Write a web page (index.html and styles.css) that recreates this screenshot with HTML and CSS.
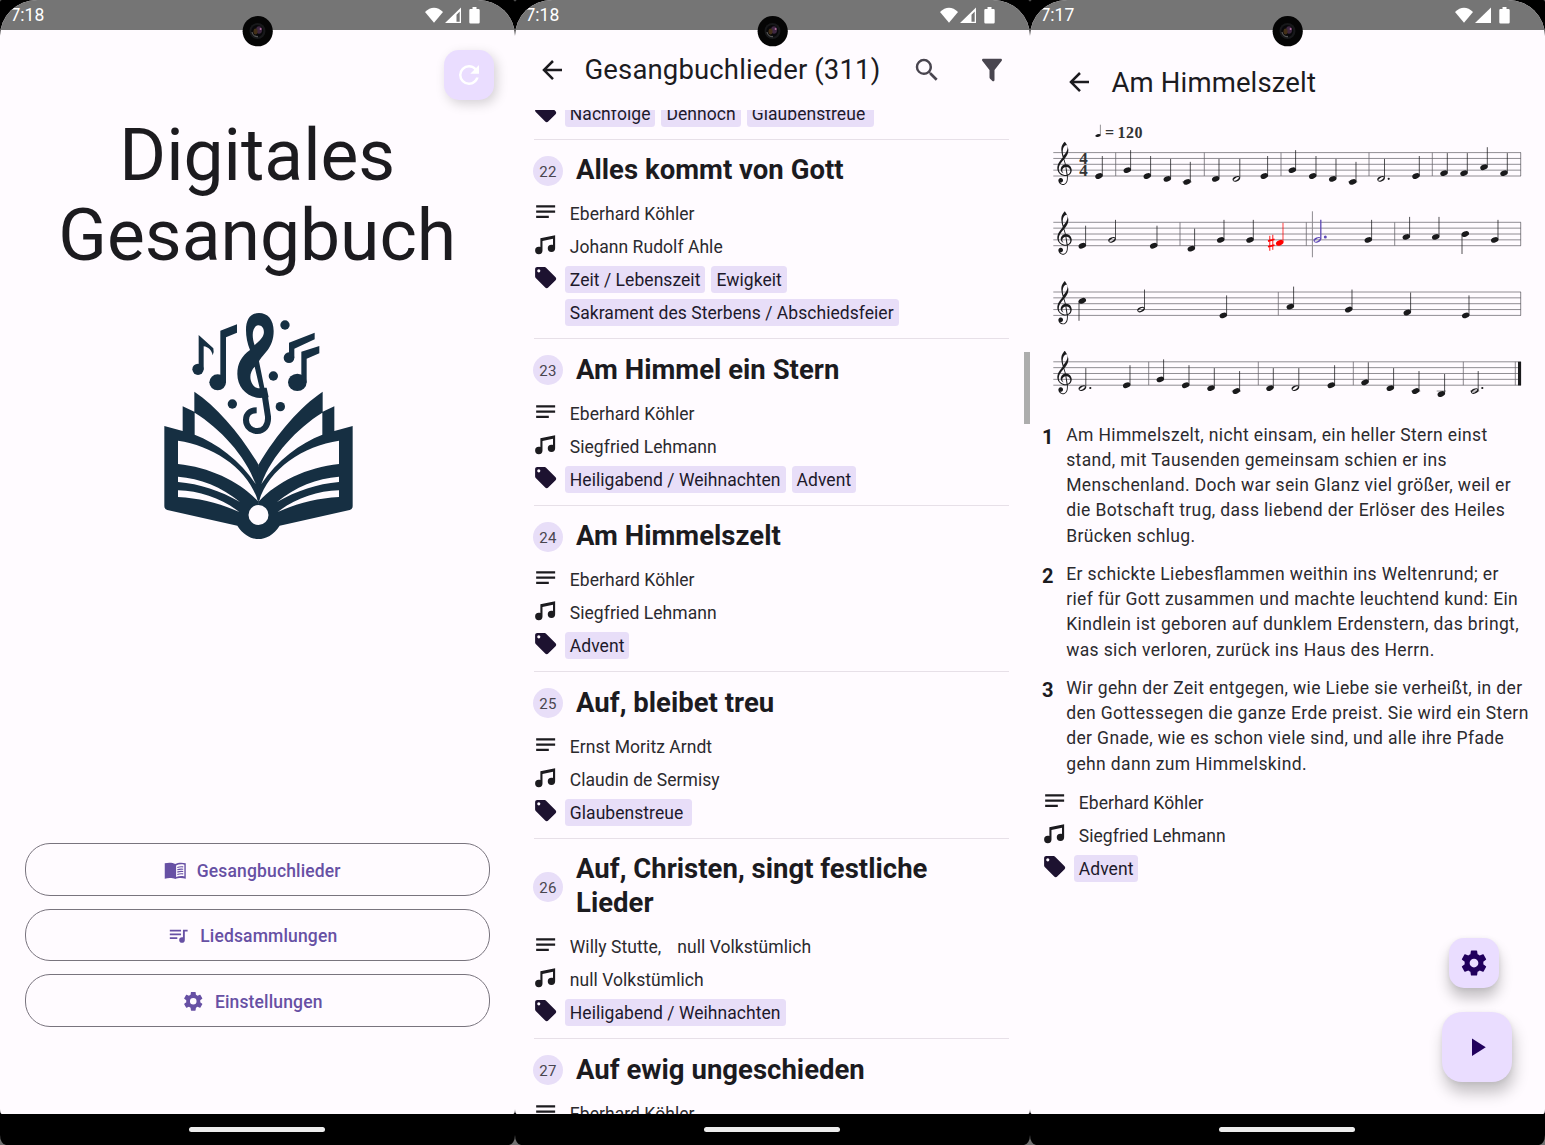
FILE: index.html
```html
<!DOCTYPE html>
<html lang="de">
<head>
<meta charset="utf-8">
<title>Digitales Gesangbuch</title>
<link rel="stylesheet" href="styles.css">
</head>
<body>
<svg class="defs" width="0" height="0" aria-hidden="true">
  <defs>
    <symbol id="i-back" viewBox="0 0 24 24"><path d="M20,11V13H8L13.5,18.5L12.08,19.92L4.16,12L12.08,4.08L13.5,5.5L8,11H20Z"/></symbol>
    <symbol id="i-search" viewBox="0 0 24 24"><path d="M9.5,3A6.5,6.5 0 0,1 16,9.5C16,11.11 15.41,12.59 14.44,13.73L14.71,14H15.5L20.5,19L19,20.5L14,15.5V14.71L13.73,14.44C12.59,15.41 11.11,16 9.5,16A6.5,6.5 0 0,1 3,9.5A6.5,6.5 0 0,1 9.5,3M9.5,5C7,5 5,7 5,9.5C5,12 7,14 9.5,14C12,14 14,12 14,9.5C14,7 12,5 9.5,5Z"/></symbol>
    <symbol id="i-filter" viewBox="0 0 24 24"><path d="M14,12V19.88C14.04,20.18 13.94,20.5 13.71,20.71C13.32,21.1 12.69,21.1 12.3,20.71L10.29,18.7C10.06,18.47 9.96,18.16 10,17.87V12H9.97L4.21,4.62C3.87,4.19 3.95,3.56 4.38,3.22C4.57,3.08 4.78,3 5,3V3H19V3C19.22,3 19.43,3.08 19.62,3.22C20.05,3.56 20.13,4.19 19.79,4.62L14.03,12H14Z"/></symbol>
    <symbol id="i-refresh" viewBox="0 0 24 24"><path d="M17.65,6.35C16.2,4.9 14.21,4 12,4A8,8 0 0,0 4,12A8,8 0 0,0 12,20C15.73,20 18.84,17.45 19.73,14H17.65C16.83,16.33 14.61,18 12,18A6,6 0 0,1 6,12A6,6 0 0,1 12,6C13.66,6 15.14,6.69 16.22,7.78L13,11H20V4L17.65,6.35Z"/></symbol>
    <symbol id="i-text" viewBox="0 0 24 24"><path d="M3 18h12v-2H3v2zM3 6v2h18V6H3zm0 7h18v-2H3v2z"/></symbol>
    <symbol id="i-music" viewBox="0 0 24 24"><path d="M21,3V15.5A3.5,3.5 0 0,1 17.5,19A3.5,3.5 0 0,1 14,15.5A3.5,3.5 0 0,1 17.5,12C18.04,12 18.55,12.12 19,12.34V6.47L9,8.6V17.5A3.5,3.5 0 0,1 5.5,21A3.5,3.5 0 0,1 2,17.5A3.5,3.5 0 0,1 5.5,14C6.04,14 6.55,14.12 7,14.34V6L21,3Z"/></symbol>
    <symbol id="i-tag" viewBox="0 0 24 24"><path d="M5.5,7A1.5,1.5 0 0,1 4,5.5A1.5,1.5 0 0,1 5.5,4A1.5,1.5 0 0,1 7,5.5A1.5,1.5 0 0,1 5.5,7M21.41,11.58L12.41,2.58C12.05,2.22 11.55,2 11,2H4C2.89,2 2,2.89 2,4V11C2,11.55 2.22,12.05 2.59,12.41L11.58,21.41C11.95,21.77 12.45,22 13,22C13.55,22 14.05,21.77 14.41,21.41L21.41,14.41C21.78,14.05 22,13.55 22,13C22,12.44 21.77,11.94 21.41,11.58Z"/></symbol>
    <symbol id="i-playlist" viewBox="0 0 24 24"><path d="M15,6H3V8H15V6M15,10H3V12H15V10M3,16H11V14H3V16M17,6V14.18C16.69,14.07 16.35,14 16,14A3,3 0 0,0 13,17A3,3 0 0,0 16,20A3,3 0 0,0 19,17V8H22V6H17Z"/></symbol>
    <symbol id="i-play" viewBox="0 0 24 24"><path d="M8,5.14V19.14L19,12.14L8,5.14Z"/></symbol>
    <symbol id="i-cog" viewBox="0 0 24 24"><path d="M12,15.5A3.5,3.5 0 0,1 8.5,12A3.5,3.5 0 0,1 12,8.5A3.5,3.5 0 0,1 15.5,12A3.5,3.5 0 0,1 12,15.5M19.43,12.97C19.47,12.65 19.5,12.33 19.5,12C19.5,11.67 19.47,11.34 19.43,11L21.54,9.37C21.73,9.22 21.78,8.95 21.66,8.73L19.66,5.27C19.54,5.05 19.27,4.96 19.05,5.05L16.56,6.05C16.04,5.66 15.5,5.32 14.87,5.07L14.5,2.42C14.46,2.18 14.25,2 14,2H10C9.75,2 9.54,2.18 9.5,2.42L9.13,5.07C8.5,5.32 7.96,5.66 7.44,6.05L4.95,5.05C4.73,4.96 4.46,5.05 4.34,5.27L2.34,8.73C2.21,8.95 2.27,9.22 2.46,9.37L4.57,11C4.53,11.34 4.5,11.67 4.5,12C4.5,12.33 4.53,12.65 4.57,12.97L2.46,14.63C2.27,14.78 2.21,15.05 2.34,15.27L4.34,18.73C4.46,18.95 4.73,19.03 4.95,18.95L7.44,17.94C7.96,18.34 8.5,18.68 9.13,18.93L9.5,21.58C9.54,21.82 9.75,22 10,22H14C14.25,22 14.46,21.82 14.5,21.58L14.87,18.93C15.5,18.67 16.04,18.34 16.56,17.94L19.05,18.95C19.27,19.03 19.54,18.95 19.66,18.73L21.66,15.27C21.78,15.05 21.73,14.78 21.54,14.63L19.43,12.97Z"/></symbol>
    <symbol id="i-book" viewBox="0 0 24 24"><path fill-rule="evenodd" d="M.8 4.600C4.500 3.500 9 3.600 12 5.300C15 3.600 19.500 3.500 23.200 4.600V21C19.500 19.900 15 19.900 12 21.400C9 19.900 4.500 19.900 .8 21ZM12.900 6.900V19.200C15.500 18.200 18.600 18 21.700 18.600V6.100C18.600 5.400 15.500 5.700 12.900 6.900Z"/><path d="M14.200 9C16 8.300 18.100 8.100 20.500 8.400M14.200 11.500C16 10.800 18.100 10.600 20.500 10.900M14.200 14C16 13.300 18.100 13.100 20.500 13.400M14.200 16.500C16 15.800 18.100 15.600 20.500 15.900" fill="none" stroke="currentColor" stroke-width="1.200"/></symbol>
    <symbol id="i-status" viewBox="0 0 60 20"><path d="M1 7C6.500 1.200 13.500 1.200 19 7L10 17.800Z"/><path d="M37 2.500V18H21Z"/><path d="M46.500 4H48.500V2H52.500V4H54.500Q55.700 4 55.700 5.200V17.300Q55.700 18.500 54.500 18.500H46.500Q45.300 18.500 45.300 17.300V5.200Q45.300 4 46.500 4Z"/></symbol>
    <symbol id="i-status-low" viewBox="0 0 60 20"><path d="M1 7C6.500 1.200 13.500 1.200 19 7L10 17.800Z"/><path fill-rule="evenodd" d="M37 2.500V18H21ZM35.700 6.500L32.500 9.800V16.800H35.700Z"/><path d="M46.500 4H48.500V2H52.500V4H54.500Q55.700 4 55.700 5.200V17.300Q55.700 18.500 54.500 18.500H46.500Q45.300 18.500 45.300 17.300V5.200Q45.300 4 46.500 4Z"/></symbol>
    <symbol id="camera" viewBox="0 0 32 32"><circle cx="15.700" cy="16.200" r="15.100" fill="#050505"/><circle cx="15.500" cy="16" r="8" fill="#17181a"/><circle cx="15.300" cy="16" r="6" fill="#08080a"/><path d="M10 17A5.500 5.500 0 0 0 16 21.500" fill="none" stroke="#555" stroke-width="1.300"/><ellipse cx="17" cy="15" rx="3" ry="3.800" fill="#3f2842"/><ellipse cx="13.500" cy="16.500" rx="2" ry="3" fill="#443017"/><circle cx="18.600" cy="14" r="1" fill="#b06fa0"/></symbol>

    <!-- engraving symbols: heads are centred on 0,0; one staff space is 5.85 -->
    <g id="head"><ellipse rx="3.900" ry="2.600" transform="rotate(-22)"/></g>
    <g id="q"><use href="#head"/><path d="M3.300 -.500V-20" fill="none" stroke="currentColor" stroke-width=".75"/></g>
    <g id="qd"><use href="#head"/><path d="M-3.300 .5V20" fill="none" stroke="currentColor" stroke-width=".75"/></g>
    <g id="h"><path fill-rule="evenodd" transform="rotate(-22)" d="M-3.900 0A3.900 2.500 0 1 1 3.900 0A3.900 2.500 0 1 1 -3.900 0ZM-3.100 .6Q-1.500 1.700 1.200 .8Q3.400 .1 3 -.8Q1.500 -1.600 -1 -.9Q-3.400 -.2 -3.100 .6Z"/><path d="M3.500 -.5V-20" fill="none" stroke="currentColor" stroke-width=".75"/></g>
    <g id="ledger"><path d="M-4.600 0H4.600" stroke="currentColor" stroke-width=".5"/></g>
    <g id="staff"><path d="M23.300 0H491M23.300 5.850H491M23.300 11.700H491M23.300 17.550H491M23.300 23.400H491" fill="none" stroke="#646268" stroke-width=".72"/></g>
    <g id="clef"><path fill-rule="evenodd" transform="translate(27.300 17.550) scale(.755)" d="M9.690-37.410c.09-.09.24-.06.36 0c.12.09.57.6.96 1.110c1.770 2.340 3.210 5.850 3.570 8.730c.21 1.560.03 3.270-.45 4.860c-.69 2.310-1.920 4.470-4.230 7.440c-.3.39-.57.72-.6.75c-.03.06 0 .15.18.78c.54 1.680 1.380 4.440 1.680 5.490l.09.42l.39 0c1.470.09 2.760.51 3.960 1.290c1.830 1.230 3.060 3.210 3.390 5.520c.09.45.12 1.290.06 1.740c-.09 1.020-.33 1.830-.75 2.730c-.84 1.710-2.280 3.060-4.020 3.720l-.33.12l.03 1.260c0 1.740-.06 3.630-.21 4.620c-.45 3.060-2.190 5.490-4.470 6.210c-.57.18-.9.21-1.590.21c-.69 0-1.020-.03-1.650-.21c-1.140-.27-2.130-.84-2.940-1.650c-.99-.99-1.560-2.160-1.710-3.540c-.09-.81.06-1.530.45-2.130c.63-.99 1.830-1.560 3-1.530c1.500.09 2.640 1.320 2.730 2.940c.06 1.470-.93 2.700-2.370 2.970c-.45.06-.84.03-1.290-.09l-.21-.09l.09.12c.39.54.78.93 1.320 1.260c1.350.87 3.060 1.020 4.350.36c1.440-.72 2.520-2.280 2.970-4.350c.15-.66.24-1.500.3-3.030c.03-.84.03-2.940 0-3c-.03 0-.18 0-.36.03c-.66.12-.99.12-1.830.12c-1.050 0-1.710-.06-2.610-.3c-4.020-.99-7.110-4.350-7.800-8.460c-.12-.66-.12-.99-.12-1.830c0-.84 0-1.140.15-1.920c.36-2.280 1.410-4.620 3.300-7.290l2.790-3.600c.54-.66.96-1.200.96-1.230c0-.03-.09-.33-.18-.69c-.96-3.210-1.410-5.280-1.590-7.680c-.12-1.380-.15-3.090-.06-3.960c.33-2.670 1.380-5.070 3.120-7.080c.36-.42.99-1.050 1.170-1.140zM11.900-33.200c1.400.5 1.900 2.200 1.600 4.400c-.4 3.300-2.500 6.500-5.400 9.700c-.7-2.300-1-4.600-.9-6.400c.2-3.600 2-7.100 4.700-7.700zM8.400-13.700C4.200-8.900 2-5.700 2-1.800C2 3.600 6.100 6.700 12.300 6.500L10.800-4.200C8.400-3.900 6.600-2 6.500.3C6.500 1.800 7.300 3 8.600 4.100C6.200 3.300 4.600 1.500 4.500-1C4.500-3.900 6.500-6.800 10.100-7.700ZM12-4.200L13.600 5.900C16.100 5 17.300 3 17.200.8C17-2.200 14.900-4.200 12-4.200Z"/></g>
  </defs>
</svg>

<main class="gallery">
  <section class="phone">
    <div class="screen">
      <header class="status"><span>7:18</span><svg class="status-icons"><use href="#i-status-low"/></svg></header>
      <div class="home">
        <button class="fab fab-refresh"><svg class="icon-lg"><use href="#i-refresh"/></svg></button>
        <h1 class="home-title">Digitales Gesangbuch</h1>
        <svg class="logo" viewBox="0 0 660 750">
          <g id="book-half">
            <path fill="#162f42" d="M326 495C270 400 200 320 133 275V335L98 319V393L43 378V618Q43 627 52 630L262 677C280 705 303 717 326 717Z"/>
            <path fill="#fffbff" d="M134 338C210 385 285 465 317 552C270 480 200 430 134 404ZM84 422C190 438 295 505 324 604C270 545 180 502 84 492ZM84 530C150 535 215 560 270 606C210 572 150 552 84 546ZM84 571C150 573 215 595 268 636C205 608 150 595 84 591Z"/>
          </g>
          <use href="#book-half" transform="translate(651 0) scale(-1 1)"/>
          <path fill="#162f42" d="M318 612H333V716.500H318ZM323 500H328V600H323Z"/>
          <circle cx="325.500" cy="645" r="30" fill="#fffbff"/>
          <g fill="#162f42">
            <path fill-rule="evenodd" d="M327 39C352 39 371 58 371 93C371 145 338 162 327 184L343 263H350L356 292L330 294C290 291 262 262 262 222C262 190 275 168 300 150C292 130 288 110 288 90C288 60 300 39 327 39ZM325 76C308 78 303 105 314 136C322 126 337 118 341 102C344 88 337 76 325 76ZM314 200C300 215 297 235 307 252C313 262 320 264 329 265Z"/>
            <path fill="none" stroke="#162f42" stroke-width="18" d="M344 285L354 350C356 378 340 393 322 393C302 393 288 378 288 360C288 343 300 331 320 331"/>
            <circle cx="405" cy="75" r="14"/><circle cx="370" cy="228" r="14"/><circle cx="247" cy="312" r="14"/><circle cx="391" cy="320" r="14"/>
            <circle cx="144" cy="208" r="17"/><path d="M146 105L190 145Q193 156 188 166C185 150 175 141 161 139V208H146Z"/>
            <ellipse cx="203" cy="247" rx="25" ry="24"/><path d="M211 92L261 73V98L228 112V247H211Z"/>
            <circle cx="417" cy="173" r="16"/><path d="M417 128L494 98V118L433 146V173H417Z"/>
            <ellipse cx="442" cy="247" rx="28" ry="26"/><path d="M454 155L508 138V160L470 176V247H454Z"/>
          </g>
        </svg>
        <nav class="home-nav">
          <button class="outlined"><svg><use href="#i-book"/></svg>Gesangbuchlieder</button>
          <button class="outlined"><svg><use href="#i-playlist"/></svg>Liedsammlungen</button>
          <button class="outlined"><svg><use href="#i-cog"/></svg>Einstellungen</button>
        </nav>
      </div>
    </div>
    <footer class="gesture"><i></i></footer>
    <svg class="camera"><use href="#camera"/></svg>
  </section>

  <section class="phone">
    <div class="screen">
      <header class="status"><span>7:18</span><svg class="status-icons"><use href="#i-status-low"/></svg></header>
      <div class="appbar">
        <svg class="icon-lg"><use href="#i-back"/></svg>
        <h2>Gesangbuchlieder (311)</h2>
        <svg class="icon-lg muted search"><use href="#i-search"/></svg>
        <svg class="icon-lg muted"><use href="#i-filter"/></svg>
      </div>
      <div class="list">
        <article class="song song-cut">
          <div class="meta tags"><svg><use href="#i-tag"/></svg><div><span>Nachfolge</span><span>Dennoch</span><span class="roomy">Glaubenstreue</span></div></div>
        </article>
        <article class="song">
          <div class="song-head"><b>22</b><h3>Alles kommt von Gott</h3></div>
          <div class="meta"><svg><use href="#i-text"/></svg><p>Eberhard Köhler</p></div>
          <div class="meta"><svg><use href="#i-music"/></svg><p>Johann Rudolf Ahle</p></div>
          <div class="meta tags"><svg><use href="#i-tag"/></svg><div><span>Zeit / Lebenszeit</span><span>Ewigkeit</span><span>Sakrament des Sterbens / Abschiedsfeier</span></div></div>
        </article>
        <article class="song">
          <div class="song-head"><b>23</b><h3>Am Himmel ein Stern</h3></div>
          <div class="meta"><svg><use href="#i-text"/></svg><p>Eberhard Köhler</p></div>
          <div class="meta"><svg><use href="#i-music"/></svg><p>Siegfried Lehmann</p></div>
          <div class="meta tags"><svg><use href="#i-tag"/></svg><div><span>Heiligabend / Weihnachten</span><span>Advent</span></div></div>
        </article>
        <article class="song">
          <div class="song-head"><b>24</b><h3>Am Himmelszelt</h3></div>
          <div class="meta"><svg><use href="#i-text"/></svg><p>Eberhard Köhler</p></div>
          <div class="meta"><svg><use href="#i-music"/></svg><p>Siegfried Lehmann</p></div>
          <div class="meta tags"><svg><use href="#i-tag"/></svg><div><span>Advent</span></div></div>
        </article>
        <article class="song">
          <div class="song-head"><b>25</b><h3>Auf, bleibet treu</h3></div>
          <div class="meta"><svg><use href="#i-text"/></svg><p>Ernst Moritz Arndt</p></div>
          <div class="meta"><svg><use href="#i-music"/></svg><p>Claudin de Sermisy</p></div>
          <div class="meta tags"><svg><use href="#i-tag"/></svg><div><span class="roomy">Glaubenstreue</span></div></div>
        </article>
        <article class="song">
          <div class="song-head"><b>26</b><h3>Auf, Christen, singt festliche Lieder</h3></div>
          <div class="meta"><svg><use href="#i-text"/></svg><p>Willy Stutte,</p><p class="next">null Volkstümlich</p></div>
          <div class="meta"><svg><use href="#i-music"/></svg><p>null Volkstümlich</p></div>
          <div class="meta tags"><svg><use href="#i-tag"/></svg><div><span>Heiligabend / Weihnachten</span></div></div>
        </article>
        <article class="song">
          <div class="song-head"><b>27</b><h3>Auf ewig ungeschieden</h3></div>
          <div class="meta"><svg><use href="#i-text"/></svg><p>Eberhard Köhler</p></div>
        </article>
        <i class="scrollbar"></i>
      </div>
    </div>
    <footer class="gesture"><i></i></footer>
    <svg class="camera"><use href="#camera"/></svg>
  </section>

  <section class="phone">
    <div class="screen">
      <header class="status"><span>7:17</span><svg class="status-icons"><use href="#i-status"/></svg></header>
      <div class="appbar appbar-inset">
        <svg class="icon-lg"><use href="#i-back"/></svg>
        <h2>Am Himmelszelt</h2>
      </div>
      <svg class="score" viewBox="0 115 515 300">
        <g transform="translate(68 135.500) scale(.72)"><use href="#q" transform="scale(1 .75)"/></g>
        <text class="tempo" x="75" y="138">=</text><text class="tempo" x="87.500" y="138" textLength="25">120</text>
        <g transform="translate(0 152.600)">
          <use href="#staff"/><use href="#clef"/>
          <text class="meter" x="49.300" y="11.500">4</text><text class="meter" x="49.300" y="23.600">4</text>
          <path class="bar" d="M85.700 0V23.400M174.300 0V23.400M251 0V23.400M339 0V23.400M402.300 0V23.400M490.700 0V23.400"/>
          <use href="#q" x="69" y="23.400"/><use href="#q" x="97.300" y="17.550"/><use href="#q" x="117.300" y="23.400"/><use href="#q" x="137.300" y="26.300"/><use href="#q" x="157" y="29.250"/><use href="#ledger" x="157" y="29.250"/>
          <use href="#q" x="185.700" y="26.300"/><use href="#h" x="206.300" y="26.300"/><use href="#q" x="234.300" y="23.400"/>
          <use href="#q" x="262.300" y="17.550"/><use href="#q" x="282.700" y="23.400"/><use href="#q" x="302.700" y="26.300"/><use href="#q" x="322.700" y="29.250"/><use href="#ledger" x="322.700" y="29.250"/>
          <use href="#h" x="351" y="26.300"/><circle cx="358.700" cy="26.200" r="1.100"/><use href="#q" x="386" y="23.400"/>
          <use href="#q" x="414" y="20.500"/><use href="#q" x="434" y="20.500"/><use href="#q" x="454" y="14.600"/><use href="#q" x="474" y="20.500"/>
        </g>
        <g transform="translate(0 222.300)">
          <use href="#staff"/><use href="#clef"/>
          <path class="bar" d="M150 0V23.400M276.300 0V23.400M364.700 0V23.400M490.700 0V23.400"/>
          <use href="#q" x="52.300" y="23.400"/><use href="#h" x="82" y="17.550"/><use href="#q" x="123.700" y="23.400"/>
          <use href="#q" x="161.300" y="26.300"/><use href="#q" x="190.700" y="17.550"/><use href="#q" x="220" y="17.550"/>
          <g class="wrong"><use href="#q" x="249.700" y="20.500"/><path d="M239.800 13.500V28.500M242.800 12.500V27.500" fill="none" stroke="red" stroke-width=".9"/><path d="M238 18.800L244.500 17M238 24.500L244.500 22.700" fill="none" stroke="red" stroke-width="1.700"/></g>
          <path class="cursor" d="M282.400 -11V35"/>
          <g class="active"><use href="#h" x="287.300" y="17.550"/><path d="M290.800 17V-2.500" stroke="currentColor"/><circle cx="295.300" cy="14.700" r="1.500"/></g><use href="#q" x="338.300" y="17.550"/>
          <use href="#q" x="376.300" y="14.600"/><use href="#q" x="405.700" y="14.600"/><use href="#qd" x="435.300" y="11.700"/><use href="#q" x="464.700" y="17.550"/>
        </g>
        <g transform="translate(0 292)">
          <use href="#staff"/><use href="#clef"/>
          <path class="bar" d="M248.300 0V23.400M490.700 0V23.400"/>
          <use href="#qd" x="52.300" y="8.800"/><use href="#h" x="111" y="17.550"/><use href="#q" x="193.300" y="23.400"/>
          <use href="#q" x="260.300" y="14.600"/><use href="#q" x="318.700" y="17.550"/><use href="#q" x="377.300" y="20.500"/><use href="#q" x="435.700" y="23.400"/>
        </g>
        <g transform="translate(0 361.800)">
          <use href="#staff"/><use href="#clef"/>
          <path class="bar" d="M118.700 0V23.400M228.300 0V23.400M323.300 0V23.400M433.300 0V23.400M485.300 0V23.400"/><rect x="488" width="3.100" height="23.600"/>
          <use href="#h" x="52.300" y="26.300"/><circle cx="60.300" cy="26.200" r="1.100"/><use href="#q" x="96.700" y="23.400"/>
          <use href="#q" x="130.300" y="17.550"/><use href="#q" x="155.700" y="23.400"/><use href="#q" x="181" y="26.300"/><use href="#q" x="206.300" y="29.250"/><use href="#ledger" x="206.300" y="29.250"/>
          <use href="#q" x="240" y="26.300"/><use href="#h" x="265.300" y="26.300"/><use href="#q" x="301.300" y="23.400"/>
          <use href="#q" x="335" y="20.500"/><use href="#q" x="360.300" y="26.300"/><use href="#q" x="385.700" y="29.250"/><use href="#ledger" x="385.700" y="29.250"/><use href="#q" x="411.300" y="32.200"/><use href="#ledger" x="411.300" y="29.250"/>
          <use href="#h" x="444.700" y="29.250"/><use href="#ledger" x="444.700" y="29.250"/><circle cx="452.300" cy="26.200" r="1.100"/>
        </g>
      </svg>
      <div class="lyrics">
        <b>1</b><p>Am Himmelszelt, nicht einsam, ein heller Stern einst<br>stand, mit Tausenden gemeinsam schien er ins<br>Menschenland. Doch war sein Glanz viel größer, weil er<br>die Botschaft trug, dass liebend der Erlöser des Heiles<br>Brücken schlug.</p>
        <b>2</b><p>Er schickte Liebesflammen weithin ins Weltenrund; er<br>rief für Gott zusammen und machte leuchtend kund: Ein<br>Kindlein ist geboren auf dunklem Erdenstern, das bringt,<br>was sich verloren, zurück ins Haus des Herrn.</p>
        <b>3</b><p>Wir gehn der Zeit entgegen, wie Liebe sie verheißt, in der<br>den Gottessegen die ganze Erde preist. Sie wird ein Stern<br>der Gnade, wie es schon viele sind, und alle ihre Pfade<br>gehn dann zum Himmelskind.</p>
      </div>
      <div class="credits">
        <div class="meta"><svg><use href="#i-text"/></svg><p>Eberhard Köhler</p></div>
        <div class="meta"><svg><use href="#i-music"/></svg><p>Siegfried Lehmann</p></div>
        <div class="meta tags"><svg><use href="#i-tag"/></svg><div><span>Advent</span></div></div>
      </div>
      <div class="fabs">
        <button class="fab"><svg class="icon-lg"><use href="#i-cog"/></svg></button>
        <button class="fab fab-large"><svg class="icon-lg"><use href="#i-play"/></svg></button>
      </div>
    </div>
    <footer class="gesture"><i></i></footer>
    <svg class="camera"><use href="#camera"/></svg>
  </section>
</main>
</body>
</html>
```
FILE: styles.css
```css
* { box-sizing: border-box; margin: 0; padding: 0; }
body { width: 1545px; height: 1145px; overflow: hidden; background: #707070; font-family: Roboto, "Liberation Sans", sans-serif; color: #1c1b1f; }
.defs { position: absolute; }
svg { display: block; flex: none; fill: currentColor; }
button { font: inherit; border: 0; background: none; }

.gallery { display: grid; grid-template-columns: repeat(3, 515px); }
.phone { position: relative; height: 1145px; display: flex; flex-direction: column; background: #000; border-radius: 2px 2px 6px 6px / 2px 2px 10px 10px; }
.screen { position: relative; height: 1114px; display: flex; flex-direction: column; overflow: hidden; background: #fffbff; border-radius: 37px 37px 2px 2px / 36px 36px 5px 5px; }
.status { flex: none; height: 29.500px; padding: 1px 31px 0 10.500px; display: flex; justify-content: space-between; align-items: center; background: #757575; color: #fff; font-size: 17.500px; }
.status-icons { width: 60px; height: 20px; }
.camera { position: absolute; left: 242px; top: 15px; width: 32px; height: 32px; }
.gesture { flex: 1; display: flex; justify-content: center; align-items: center; padding-right: 1.500px; }
.gesture i { width: 136px; height: 5.500px; border-radius: 3px; background: #ececec; }

.icon-lg { width: 30px; height: 30px; }
.muted { color: #49454f; }

.fab { flex: none; width: 50px; height: 50px; border-radius: 15px; display: grid; place-items: center; background: #eaddff; color: #21005d; box-shadow: 0 10px 14px rgba(0, 0, 0, .23), 0 1px 5px rgba(0, 0, 0, .07); }
.fab-large { width: 70px; height: 70px; border-radius: 20px; box-shadow: 2px 11px 15px rgba(0, 0, 0, .23), 0 1px 5px rgba(0, 0, 0, .07); }
.fab-refresh { align-self: flex-end; color: #fff; box-shadow: 3px 4px 12px rgba(0, 0, 0, .17); }
.fabs { position: absolute; right: 33px; bottom: 32px; display: flex; flex-direction: column; align-items: center; gap: 24px; }
.fabs .fab:first-child { margin-right: 6px; }

.home { flex: 1; display: flex; flex-direction: column; align-items: center; padding: 20px 20.500px 87.500px 20px; }
.home-title { width: 420px; margin-top: 16.500px; font-size: 71.400px; line-height: 80px; font-weight: 400; text-align: center; }
.fab-refresh { margin-right: .5px; }
.logo { width: 220px; height: 250px; margin: 23.500px 0 0 5px; }
.home-nav { margin-top: auto; align-self: stretch; padding: 0 5px; display: flex; flex-direction: column; gap: 13px; }
.outlined { height: 52.500px; border: 1.250px solid #79747e; border-radius: 25px; display: flex; justify-content: center; align-items: center; gap: 10.500px; padding: 3px 10px 0 0; color: #6750a4; font-size: 17.500px; font-weight: 500; letter-spacing: .15px; }
.outlined svg { width: 22.500px; height: 22.500px; margin-top: -2px; }

.appbar { flex: none; height: 80px; display: flex; align-items: center; padding: 0 23px 0 22px; }
.appbar h2 { flex: 1; margin-left: 17.500px; font-size: 27.500px; font-weight: 400; letter-spacing: .14px; white-space: nowrap; }
.search { margin-right: 35.500px; }
.appbar-inset { height: 85.500px; padding: 20px 0 0 34px; }

.list { flex: 1; min-height: 0; overflow: hidden; position: relative; padding: 0 21px 0 19px; }
.song { padding: 14px 0 9px; border-bottom: 1px solid #e7e0e8; }
.song-cut { padding-top: 0; margin-top: -13px; }
.song-head { display: flex; align-items: center; gap: 13px; margin: -.5px 0 10px -1px; }
.song-head b { flex: none; width: 30px; height: 30px; border-radius: 50%; background: #e8def8; display: grid; place-items: center; font-size: 15px; font-weight: 400; letter-spacing: .2px; color: #49454f; padding-top: 2px; margin-top: 1px; }
.song-head h3 { font-size: 27.500px; line-height: 34px; font-weight: 700; max-width: 400px; letter-spacing: .02px; }
.meta { display: flex; min-height: 33px; line-height: 34.500px; height: 33px; font-size: 17.500px; letter-spacing: .05px; color: #2b2a2e; }
.meta svg { width: 25.300px; height: 25.300px; margin: 2px 6.500px 0 -1px; color: #1c1b1f; }
.meta p { padding-left: 5px; }
.meta .next { padding-left: 16px; }
.meta.tags { height: auto; }
.meta.tags svg { color: #1d1230; }
.tags div { display: flex; flex-wrap: wrap; gap: 6px; padding: 3px 0; }
.tags span { height: 27px; line-height: 29px; padding: 0 5px; border-radius: 3.500px; background: #e8def8; color: #1d192b; }
.tags .roomy { padding-right: 9px; }
.scrollbar { position: absolute; right: 0; top: 242.500px; width: 6px; height: 72px; background: #adadad; }

.score { width: 515px; height: 300px; color: #1a1a1c; }
.bar { fill: none; stroke: #646268; stroke-width: .75; }
.cursor { fill: none; stroke: #8d8a90; stroke-width: 1; }
.wrong { color: red; fill: red; }
.active { color: #5f4bb6; fill: #5f4bb6; }
.tempo { font: bold 16px "Liberation Serif", serif; fill: #333; }
.meter { font: bold 17px "Liberation Serif", serif; fill: #333; }

.lyrics { display: grid; grid-template-columns: 24.200px 1fr; row-gap: 13px; padding: 7.500px 0 0 12px; font-size: 17.500px; line-height: 25.250px; letter-spacing: .37px; color: #2b2a2e; white-space: nowrap; font-feature-settings: "liga" 1; }
.lyrics b { font-size: 20px; letter-spacing: 0; padding-top: 2px; color: #1c1b1f; }
.credits { padding: 9px 0 0 13px; }
```
